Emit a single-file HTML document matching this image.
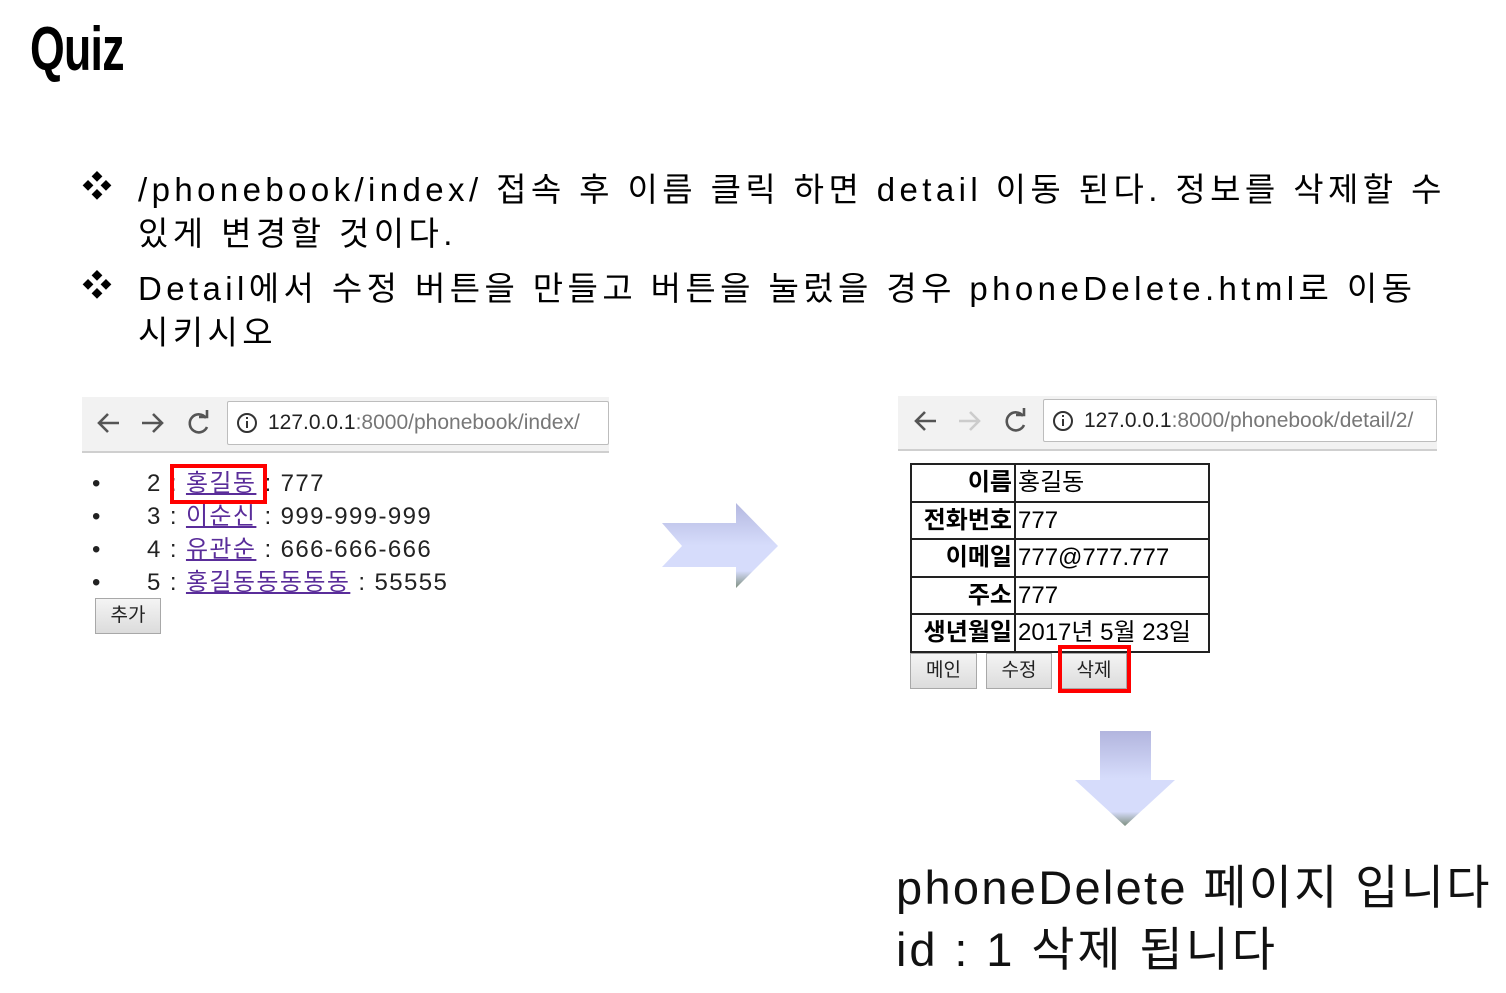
<!DOCTYPE html>
<html><head><meta charset="utf-8"><style>
body{margin:0;width:1506px;height:993px;background:#fff;position:relative;overflow:hidden;font-family:"Liberation Sans","Noto Sans CJK KR",sans-serif;color:#000}
.a{position:absolute;white-space:nowrap}
.t{font-size:33px;line-height:44px;letter-spacing:4.4px}
.tb{background:#f2f2f2;border-bottom:2px solid #cfcfcf}
.addr{background:#fff;border:1px solid #bdbdbd;border-radius:2px;font-size:21px;color:#777;line-height:42px;padding-left:40px;box-sizing:border-box;overflow:hidden}
.addr b{font-weight:normal;color:#222}
.li{font-size:24px;line-height:33px;color:#222;letter-spacing:1.4px}
.li a{color:#5a2d9a;text-decoration:underline}
.btn{background:linear-gradient(#f4f4f4,#dcdcdc);border:1px solid #a8a8a8;font-size:19px;text-align:center;color:#222;box-sizing:border-box}
table{border-collapse:collapse;font-size:24px}
td{border:2px solid #222;height:35.5px;padding:0 2px;line-height:33px}
td.k{text-align:right;font-weight:bold;width:98px}
td.v{width:188px}
</style></head><body>
<div class="a" style="left:30px;top:14px;font-size:62px;font-weight:bold;transform:scaleX(.72);transform-origin:left top;letter-spacing:-1px">Quiz</div>

<div class="a t" style="left:82px;top:166px;font-size:30px;letter-spacing:0">❖</div>
<div class="a t" style="left:138px;top:168px">/phonebook/index/ 접속 후 이름 클릭 하면 detail 이동 된다. 정보를 삭제할 수</div>
<div class="a t" style="left:138px;top:212px">있게 변경할 것이다.</div>
<div class="a t" style="left:82px;top:265px;font-size:30px;letter-spacing:0">❖</div>
<div class="a t" style="left:138px;top:267px">Detail에서 수정 버튼을 만들고 버튼을 눌렀을 경우 phoneDelete.html로 이동</div>
<div class="a t" style="left:138px;top:311px">시키시오</div>

<!-- browser 1 -->
<div class="a tb" style="left:82px;top:397px;width:527px;height:54px"></div>
<svg class="a" style="left:95px;top:408px" width="120" height="30" viewBox="0 0 120 30" fill="none" stroke="#555" stroke-width="2.6">
<path d="M4 15h20M13 6l-9 9 9 9"/><path d="M47 15h20M58 6l9 9-9 9"/>
<path d="M111 10a9 9 0 1 0 1 9"/><path d="M104 9h8V2" fill="none"/></svg>
<div class="a addr" style="left:227px;top:401px;width:382px;height:44px"><b>127.0.0.1</b>:8000/phonebook/index/</div>
<svg class="a" style="left:236px;top:412px" width="22" height="22"><circle cx="11" cy="11" r="9" fill="none" stroke="#333" stroke-width="2"/><rect x="10" y="9" width="2" height="7" fill="#333"/><rect x="10" y="5" width="2" height="2" fill="#333"/></svg>

<div class="a li" style="left:92px;top:467px">•</div><div class="a li" style="left:147px;top:467px">2 : <a>홍길동</a> : 777</div>
<div class="a li" style="left:92px;top:500px">•</div><div class="a li" style="left:147px;top:500px">3 : <a>이순신</a> : 999-999-999</div>
<div class="a li" style="left:92px;top:533px">•</div><div class="a li" style="left:147px;top:533px">4 : <a>유관순</a> : 666-666-666</div>
<div class="a li" style="left:92px;top:566px">•</div><div class="a li" style="left:147px;top:566px">5 : <a>홍길동동동동동</a> : 55555</div>
<div class="a btn" style="left:95px;top:598px;width:66px;height:36px;line-height:34px">추가</div>
<div class="a" style="left:170px;top:464px;width:97px;height:40px;border:4px solid #f00;box-sizing:border-box"></div>

<!-- right arrow -->
<svg class="a" style="left:660px;top:500px" width="122" height="92">
<defs><linearGradient id="g1" x1="0" y1="0" x2="0" y2="1"><stop offset="0" stop-color="#b4b8e0"/><stop offset=".5" stop-color="#d6dcfb"/><stop offset=".8" stop-color="#d6dcfb"/><stop offset="1" stop-color="#7f9080"/></linearGradient></defs>
<path d="M2 23H76V3L118 46L76 88V67H2L22 46Z" fill="url(#g1)"/></svg>

<!-- browser 2 -->
<div class="a tb" style="left:898px;top:396px;width:539px;height:53px"></div>
<svg class="a" style="left:912px;top:406px" width="120" height="30" viewBox="0 0 120 30" fill="none" stroke-width="2.6">
<path d="M4 15h20M13 6l-9 9 9 9" stroke="#555"/><path d="M47 15h20M58 6l9 9-9 9" stroke="#ccc"/>
<path d="M111 10a9 9 0 1 0 1 9" stroke="#555"/><path d="M104 9h8V2" stroke="#555"/></svg>
<div class="a addr" style="left:1043px;top:399px;width:394px;height:43px;line-height:41px"><b>127.0.0.1</b>:8000/phonebook/detail/2/</div>
<svg class="a" style="left:1052px;top:410px" width="22" height="22"><circle cx="11" cy="11" r="9" fill="none" stroke="#333" stroke-width="2"/><rect x="10" y="9" width="2" height="7" fill="#333"/><rect x="10" y="5" width="2" height="2" fill="#333"/></svg>

<table class="a" style="left:910px;top:463px">
<tr><td class="k">이름</td><td class="v">홍길동</td></tr>
<tr><td class="k">전화번호</td><td class="v">777</td></tr>
<tr><td class="k">이메일</td><td class="v">777@777.777</td></tr>
<tr><td class="k">주소</td><td class="v">777</td></tr>
<tr><td class="k">생년월일</td><td class="v">2017년 5월 23일</td></tr>
</table>
<div class="a btn" style="left:910px;top:653px;width:67px;height:36px;line-height:34px">메인</div>
<div class="a btn" style="left:986px;top:653px;width:66px;height:36px;line-height:34px">수정</div>
<div class="a btn" style="left:1061px;top:653px;width:66px;height:36px;line-height:34px">삭제</div>
<div class="a" style="left:1058px;top:645px;width:73px;height:48px;border:4px solid #f00;box-sizing:border-box"></div>

<!-- down arrow -->
<svg class="a" style="left:1072px;top:728px" width="106" height="102">
<defs><linearGradient id="g2" x1="0" y1="0" x2="0" y2="1"><stop offset="0" stop-color="#b2b5de"/><stop offset=".5" stop-color="#d6dcfb"/><stop offset=".85" stop-color="#d6dcfb"/><stop offset="1" stop-color="#7f9080"/></linearGradient></defs>
<path d="M28 3H79V52H103L53 98L3 52H28Z" fill="url(#g2)"/></svg>

<div class="a" style="left:896px;top:858px;font-size:47px;line-height:60px;color:#111;letter-spacing:2.3px">phoneDelete 페이지 입니다</div>
<div class="a" style="left:896px;top:920px;font-size:47px;line-height:60px;color:#111;letter-spacing:2.9px">id : 1 삭제 됩니다</div>
</body></html>
